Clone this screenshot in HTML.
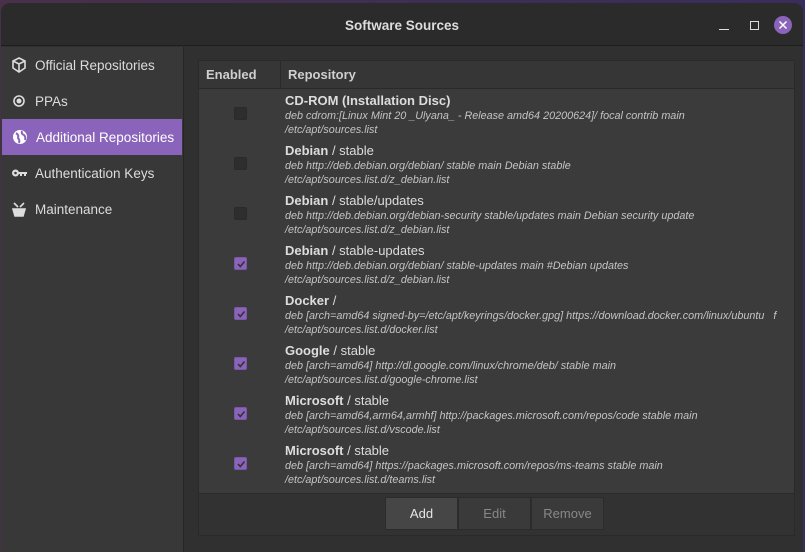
<!DOCTYPE html><html><head><style>
*{margin:0;padding:0;box-sizing:border-box}
body{width:805px;height:552px;overflow:hidden;background:linear-gradient(90deg,#4a2f4a,#3b2f55 60%,#3a2d5c);font-family:"Liberation Sans",sans-serif;position:relative}
.win{position:absolute;left:1px;top:3px;width:802px;height:549px;background:#303030;border-radius:9px 9px 0 0;overflow:hidden}
.title{height:43px;background:#2b2b2b;border-bottom:1px solid #1e1e1e;color:#ddd;font-weight:bold;font-size:13.5px;text-align:center;line-height:46px}
.side{position:absolute;left:0;top:44px;width:183px;bottom:0;background:#383838;border-right:1px solid #262626}
.it{height:36px;display:flex;align-items:center;padding-left:10px;color:#dcdcdc;font-size:13.5px}
.it .ic{width:16px;height:16px;margin-right:8px;display:flex;align-items:center;justify-content:center}
.it.sel{background:#8a64ba;color:#fff;margin:0 1px;}
.tbl{position:absolute;left:197px;top:57px;width:597px;height:434px;background:#3b3b3b;border:1px solid #2a2a2a}
.hd{height:28px;border-bottom:1px solid #2a2a2a;display:flex;color:#cfcfcf;font-weight:bold;font-size:13px;line-height:28px;background:#363636}
.hd div:first-child{width:82px;padding-left:7px;border-right:1px solid #2a2a2a}
.hd div:last-child{padding-left:7px}
.row{height:50px;position:relative}
.cb{position:absolute;left:35px;top:16px;width:13px;height:13px;border-radius:2px;background:#2e2e2e;border:1px solid #2a2a2a}
.cb.on{background:#8a64ba;border-color:#7a58a8}
.cb.on svg{position:absolute;left:1px;top:1px}
.tx{position:absolute;left:86px;top:1px;white-space:nowrap;color:#ddd}
.nm{font-size:13px;line-height:17px}
.nm b{font-weight:bold}
.d{font-size:10.8px;font-style:italic;color:#c4c4c4;line-height:14px}
.bar{position:absolute;left:197px;top:491px;width:597px;height:42px;background:#323232;border:1px solid #2a2a2a;border-top:none}
.btns{position:absolute;left:186px;top:3px;display:flex}
.btns div{width:73px;height:33px;background:#3a3a3a;border:1px solid #2c2c2c;color:#888;font-size:13px;text-align:center;line-height:32px}
.btns div:first-child{background:#464646;color:#e6e6e6}
</style></head><body>
<div class="win">
<div class="title">Software Sources</div>
<div style="position:absolute;left:718px;top:26px;width:10px;height:1px;background:#ddd"></div>
<div style="position:absolute;left:749px;top:18px;width:9px;height:9px;border:1.5px solid #ddd"></div>
<div style="position:absolute;left:773px;top:13px;width:18px;height:18px;border-radius:50%;background:#8a64ba"><svg width="18" height="18"><path d="M5.5 5.5L12.5 12.5M12.5 5.5L5.5 12.5" stroke="#fff" stroke-width="1.5"/></svg></div>
<div class="side">
<div class="it"><span class="ic"><svg width="16" height="16"><path d="M8 1L14 4V11L8 15L2 11V4Z M2 4L8 7L14 4 M8 7V15" fill="none" stroke="#ddd" stroke-width="1.6"/></svg></span>Official Repositories</div>
<div class="it"><span class="ic"><svg width="16" height="16"><circle cx="8" cy="8" r="5" fill="none" stroke="#ddd" stroke-width="1.6"/><circle cx="8" cy="8" r="2.5" fill="#ddd"/></svg></span>PPAs</div>
<div class="it sel"><span class="ic"><svg width="16" height="16"><circle cx="8" cy="8" r="7" fill="#fff"/><path d="M4 4Q7 6 6 9Q8 11 7 14M10 2Q9 5 12 6Q14 8 13 11" stroke="#8a64ba" stroke-width="2" fill="none"/></svg></span>Additional Repositories</div>
<div class="it"><span class="ic"><svg width="16" height="16"><circle cx="4.5" cy="8" r="3.5" fill="#ddd"/><circle cx="4.5" cy="8" r="1.3" fill="#383838"/><path d="M7 7H16V9H15V11H13V9H11V11H9V9H7Z" fill="#ddd"/></svg></span>Authentication Keys</div>
<div class="it"><span class="ic"><svg width="16" height="16"><path d="M2 8H14L12 15H4Z M3 2L7 6M13 2L9 6" fill="#ddd" stroke="#ddd" stroke-width="1.6"/></svg></span>Maintenance</div>
</div>
<div class="tbl">
<div class="hd"><div>Enabled</div><div>Repository</div></div>
<div style="height:2px"></div>
<div class="row"><div class="cb"></div><div class="tx"><div class="nm"><b>CD-ROM (Installation Disc)</b></div><div class="d">deb cdrom:[Linux Mint 20 _Ulyana_ - Release amd64 20200624]/ focal contrib main</div><div class="d">/etc/apt/sources.list</div></div></div>
<div class="row"><div class="cb"></div><div class="tx"><div class="nm"><b>Debian</b> / stable</div><div class="d">deb http://deb.debian.org/debian/ stable main Debian stable</div><div class="d">/etc/apt/sources.list.d/z_debian.list</div></div></div>
<div class="row"><div class="cb"></div><div class="tx"><div class="nm"><b>Debian</b> / stable/updates</div><div class="d">deb http://deb.debian.org/debian-security stable/updates main Debian security update</div><div class="d">/etc/apt/sources.list.d/z_debian.list</div></div></div>
<div class="row"><div class="cb on"><svg width="10" height="10"><path d="M2 5L4.3 7.5L8.5 2.5" stroke="#333" stroke-width="1.6" fill="none"/></svg></div><div class="tx"><div class="nm"><b>Debian</b> / stable-updates</div><div class="d">deb http://deb.debian.org/debian/ stable-updates main #Debian updates</div><div class="d">/etc/apt/sources.list.d/z_debian.list</div></div></div>
<div class="row"><div class="cb on"><svg width="10" height="10"><path d="M2 5L4.3 7.5L8.5 2.5" stroke="#333" stroke-width="1.6" fill="none"/></svg></div><div class="tx"><div class="nm"><b>Docker</b> /</div><div class="d">deb [arch=amd64 signed-by=/etc/apt/keyrings/docker.gpg] https://download.docker.com/linux/ubuntu &nbsp; f</div><div class="d">/etc/apt/sources.list.d/docker.list</div></div></div>
<div class="row"><div class="cb on"><svg width="10" height="10"><path d="M2 5L4.3 7.5L8.5 2.5" stroke="#333" stroke-width="1.6" fill="none"/></svg></div><div class="tx"><div class="nm"><b>Google</b> / stable</div><div class="d">deb [arch=amd64] http://dl.google.com/linux/chrome/deb/ stable main</div><div class="d">/etc/apt/sources.list.d/google-chrome.list</div></div></div>
<div class="row"><div class="cb on"><svg width="10" height="10"><path d="M2 5L4.3 7.5L8.5 2.5" stroke="#333" stroke-width="1.6" fill="none"/></svg></div><div class="tx"><div class="nm"><b>Microsoft</b> / stable</div><div class="d">deb [arch=amd64,arm64,armhf] http://packages.microsoft.com/repos/code stable main</div><div class="d">/etc/apt/sources.list.d/vscode.list</div></div></div>
<div class="row"><div class="cb on"><svg width="10" height="10"><path d="M2 5L4.3 7.5L8.5 2.5" stroke="#333" stroke-width="1.6" fill="none"/></svg></div><div class="tx"><div class="nm"><b>Microsoft</b> / stable</div><div class="d">deb [arch=amd64] https://packages.microsoft.com/repos/ms-teams stable main</div><div class="d">/etc/apt/sources.list.d/teams.list</div></div></div>
</div>
<div class="bar"><div class="btns"><div>Add</div><div>Edit</div><div>Remove</div></div></div>
</div>
</body></html>
